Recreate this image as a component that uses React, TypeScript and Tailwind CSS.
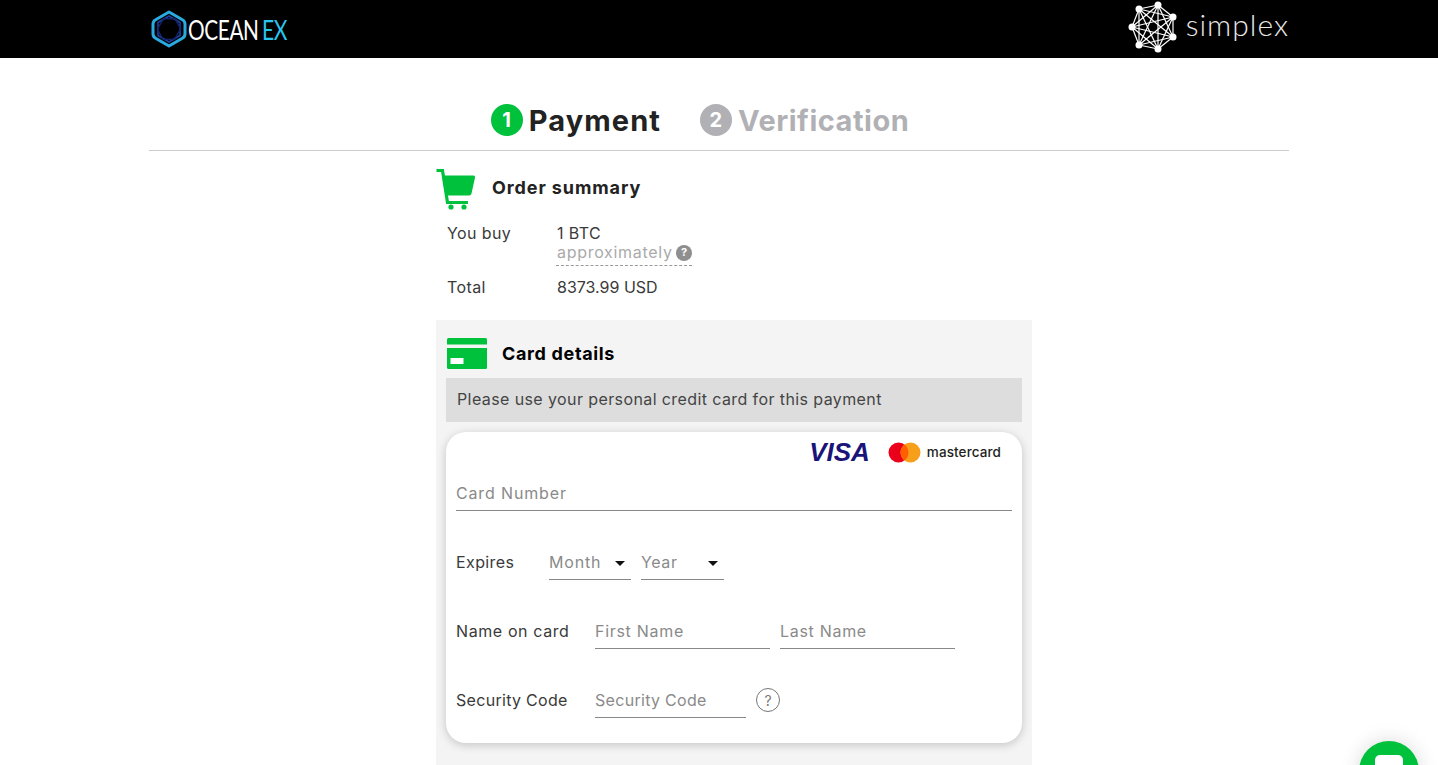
const points: [number, number][] = [
  [30, 5],
  [11, 9],
  [45, 17],
  [4, 27],
  [45, 37],
  [11, 45],
  [30, 49],
];

function OceanLogo() {
  return (
    <div className="ml-[2px] flex items-center">
      <svg width="36" height="38" viewBox="0 0 36 38" fill="none">
        <path d="M18 2 L31 9.500 Q34 11 34 14 V24 Q34 27 31 28.500 L18 36 L5 28.500 Q2 27 2 24 V14 Q2 11 5 9.500 Z" stroke="#29abe2" strokeWidth="3" strokeLinejoin="round" />
        <path d="M18 6 L29 12.500 V25.500 L18 32 L7 25.500 V12.500 Z" stroke="#1c3f9e" strokeWidth="1.6" />
        <path d="M18 7 L28 13 V25 L18 31 L8 25 V13 Z" stroke="#14246b" strokeWidth="1.4" transform="rotate(30 18 19)" />
      </svg>
      <span className="ml-[1px] inline-block w-[73px] origin-left scale-x-[0.77] font-['Lato',sans-serif] text-[27px] font-normal leading-none tracking-[-0.5px] text-white">OCEAN</span>
      <span className="ml-[1px] inline-block w-[26px] origin-left scale-x-[0.78] font-['Lato',sans-serif] text-[27px] font-normal leading-none tracking-[-0.5px] text-[#29c5f0]">EX</span>
    </div>
  );
}

function SimplexLogo() {
  return (
    <div className="flex items-center pb-[4px]">
      <svg width="50" height="54" viewBox="0 0 50 54" fill="none">
        {points.map((a, i) =>
          points.slice(i + 1).map((b, j) => (
            <line key={i + "-" + j} x1={a[0]} y1={a[1]} x2={b[0]} y2={b[1]} stroke="#fff" strokeWidth="1.2" />
          ))
        )}
        {points.map((p, i) => (
          <circle key={i} cx={p[0]} cy={p[1]} r="3.500" fill="#fff" />
        ))}
      </svg>
      <span className="ml-[8px] pb-[6px] font-['Lato',sans-serif] text-[30px] font-light leading-none tracking-[1px] text-[#e8e8e8]">
        simplex
      </span>
    </div>
  );
}

function CartIcon() {
  return (
    <svg width="40" height="41" viewBox="0 0 40 41" fill="#00c13c">
      <path d="M6 6.500 H37.500 Q39.500 6.500 39 8.500 L35.500 24.500 Q35 26.500 33 26.500 H9.500 Z" />
      <path d="M0.500 1.500 H6.500 L11.500 33.500 H32" fill="none" stroke="#00c13c" strokeWidth="3.200" />
      <circle cx="15" cy="38" r="2.600" />
      <circle cx="28" cy="38" r="2.600" />
    </svg>
  );
}

function CardIcon() {
  return (
    <svg width="40" height="31" viewBox="0 0 40 31" fill="#00c13c">
      <path d="M1.500 0 H38.500 Q40 0 40 1.500 V6.500 H0 V1.500 Q0 0 1.500 0 Z" />
      <path d="M0 10 H40 V29.500 Q40 31 38.500 31 H1.500 Q0 31 0 29.500 Z" />
      <rect x="3.500" y="20" width="13" height="6" fill="#fff" />
    </svg>
  );
}

function Step({ n, label, active }: { n: number; label: string; active: boolean }) {
  return (
    <div className={active ? "flex items-center gap-[6px] text-[#222]" : "flex items-center gap-[6px] text-[#b1b1b5]"}>
      <span className={active ? "flex h-[32px] w-[32px] items-center justify-center rounded-full bg-[#00c13c] text-[20px] font-bold text-white" : "flex h-[32px] w-[32px] items-center justify-center rounded-full bg-[#b1b1b5] text-[20px] font-bold text-white"}>
        {n}
      </span>
      <span className={active ? "text-[29px] font-bold leading-none tracking-[1.1px]" : "text-[29px] font-bold leading-none tracking-[0.5px]"}>{label}</span>
    </div>
  );
}

function Caret() {
  return <span className="mt-[3px] h-0 w-0 border-x-[5px] border-t-[5px] border-x-transparent border-t-[#111]" />;
}

function Field({ placeholder, className }: { placeholder: string; className: string }) {
  return (
    <input
      readOnly
      placeholder={placeholder}
      className={className + " h-[36px] border-b border-[#888] bg-transparent text-[16px] outline-none placeholder:text-[#8a8a8a]"}
    />
  );
}

export default function App() {
  return (
    <div className="h-screen overflow-hidden bg-white font-['Inter',sans-serif] text-[16px] tracking-[0.4px] text-[#3a3a3a]">
      <header className="h-[58px] bg-black">
        <div className="mx-auto flex h-full w-[1140px] items-center justify-between">
          <OceanLogo />
          <SimplexLogo />
        </div>
      </header>

      <main className="mx-auto w-[1140px]">
        <div className="flex h-[93px] items-start justify-center gap-[39px] border-b border-[#ccc] pt-[46px] pr-[38px]">
          <Step n={1} label="Payment" active />
          <Step n={2} label="Verification" active={false} />
        </div>

        <div className="ml-[287px] w-[596px]">
          <div className="flex items-center pt-[18px]">
            <CartIcon />
            <h2 className="ml-[16px] pb-[5px] text-[18px] font-bold tracking-[0.9px] text-[#222]">Order summary</h2>
          </div>

          <div className="flex pt-[14px] pl-[11px]">
            <span className="w-[109px] leading-[19px]">You buy</span>
            <div className="leading-[19px]">
              <div className="pl-[1px]">1 BTC</div>
              <div className="flex w-[136px] items-center justify-between border-b border-dashed border-[#999] pb-[3px] pl-[1px] tracking-[0.7px] text-[#aaa]">
                approximately
                <span className="flex h-[16px] w-[16px] items-center justify-center rounded-full bg-[#8f8f8f] text-[11px] font-bold tracking-normal text-white">?</span>
              </div>
            </div>
          </div>
          <div className="flex pt-[12px] pl-[11px] leading-[19px]">
            <span className="w-[109px]">Total</span>
            <span className="pl-[1px] tracking-normal">8373.99 USD</span>
          </div>

          <section className="mt-[23px] h-[500px] bg-[#f4f4f4] px-[10px] pt-[18px]">
            <div className="flex items-center pl-[1px]">
              <CardIcon />
              <h2 className="ml-[15px] text-[18px] font-bold tracking-[0.65px] text-black">Card details</h2>
            </div>
            <div className="mt-[9px] flex h-[44px] items-center bg-[#ddd] px-[11px] pb-[2px] text-[#444]">
              Please use your personal credit card for this payment
            </div>

            <div className="mt-[10px] h-[311px] rounded-[20px] bg-white px-[10px] shadow-[0_2px_10px_rgba(0,0,0,0.2)]">
              <div className="flex h-[40px] items-center justify-end gap-[18px] pr-[11px]">
                <span className="font-['Liberation_Sans',sans-serif] text-[26px] font-bold italic leading-none tracking-normal text-[#1a1478]">VISA</span>
                <div className="flex items-center gap-[6px]">
                  <svg width="33" height="21" viewBox="0 0 33 21">
                    <circle cx="10.500" cy="10.500" r="10" fill="#eb001b" />
                    <circle cx="22.500" cy="10.500" r="10" fill="#f79e1b" />
                    <path d="M16.500 2.500 a10 10 0 0 1 0 16 a10 10 0 0 1 0 -16 Z" fill="#ff5f00" />
                  </svg>
                  <span className="text-[13.500px] font-medium tracking-[0.1px] text-[#231f20]">mastercard</span>
                </div>
              </div>
              <Field placeholder="Card Number" className="mt-[3px] block w-full tracking-[0.85px]" />

              <div className="mt-[33px] flex items-center">
                <span className="w-[93px]">Expires</span>
                <div className="flex h-[36px] w-[82px] items-center justify-between border-b border-[#888] pr-[6px] tracking-[0.8px] text-[#8a8a8a]">
                  Month <Caret />
                </div>
                <div className="ml-[10px] flex h-[36px] w-[83px] items-center justify-between border-b border-[#888] pr-[6px] tracking-[0.6px] text-[#8a8a8a]">
                  Year <Caret />
                </div>
              </div>

              <div className="mt-[33px] flex items-center">
                <span className="w-[139px] tracking-[0.6px]">Name on card</span>
                <Field placeholder="First Name" className="w-[175px] tracking-[0.7px]" />
                <Field placeholder="Last Name" className="ml-[10px] w-[175px] tracking-[0.7px]" />
              </div>

              <div className="mt-[33px] flex items-center">
                <span className="w-[139px] tracking-[0.3px]">Security Code</span>
                <Field placeholder="Security Code" className="w-[151px] tracking-[0.3px]" />
                <span className="ml-[10px] flex h-[24px] w-[24px] items-center justify-center rounded-full border border-[#777] text-[14px] tracking-normal text-[#777]">?</span>
              </div>
            </div>
          </section>
        </div>
      </main>

      <div className="fixed top-[741px] left-[1359px] h-[60px] w-[60px] rounded-full bg-[#00c13c] shadow-[0_0_20px_rgba(0,0,0,0.15)]">
        <div className="mx-auto mt-[14px] h-[24px] w-[28px] rounded-[5px] bg-white" />
      </div>
    </div>
  );
}
